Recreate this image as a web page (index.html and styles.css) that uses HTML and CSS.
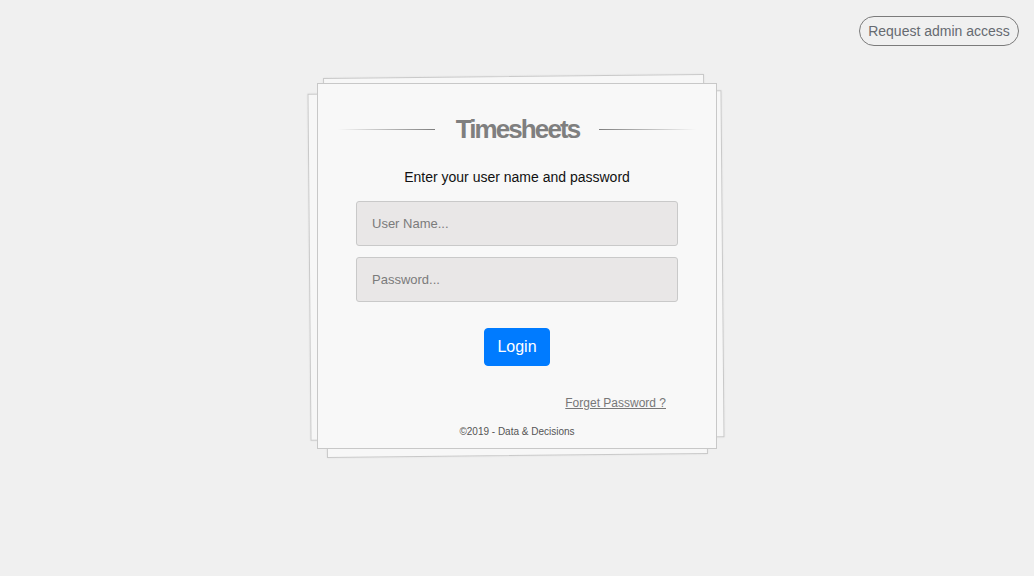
FILE: index.html
```html
<!DOCTYPE html>
<html lang="en">
<head>
<meta charset="utf-8">
<title>Timesheets - Login</title>
<link rel="stylesheet" href="styles.css">
</head>
<body>
<header class="topbar">
  <button class="admin-btn" type="button">Request admin access</button>
</header>
<main class="stage">
  <div class="card-stack">
    <div class="sheet sheet-back"></div>
    <div class="sheet sheet-mid"></div>
    <form class="card">
      <div class="title-row">
        <span class="rule rule-left"></span>
        <h1 class="title">Timesheets</h1>
        <span class="rule rule-right"></span>
      </div>
      <p class="subtitle">Enter your user name and password</p>
      <input class="field" type="text" placeholder="User Name...">
      <input class="field field-second" type="password" placeholder="Password...">
      <button class="login-btn" type="button">Login</button>
      <div class="forgot-row"><a class="forgot" href="#">Forget Password ?</a></div>
      <p class="copyright">©2019 - Data &amp; Decisions</p>
    </form>
  </div>
</main>
</body>
</html>
```

FILE: styles.css
```css
html, body {
  margin: 0;
  padding: 0;
}
body {
  background: #f0f0f0;
  font-family: "Liberation Sans", Arial, sans-serif;
  width: 1034px;
  height: 576px;
  overflow: hidden;
}
.topbar {
  display: flex;
  justify-content: flex-end;
  padding: 16px 15px 0 0;
  height: 30px;
}
.admin-btn {
  height: 30px;
  width: 160px;
  padding: 0;
  border: 1px solid #7b7b7b;
  border-radius: 15px;
  background: transparent;
  color: #666a70;
  font-family: "Liberation Sans", Arial, sans-serif;
  font-size: 14px;
  line-height: 28px;
}
.stage {
  display: flex;
  justify-content: center;
  padding-top: 37px;
}
.card-stack {
  position: relative;
  width: 400px;
  height: 366px;
}
.sheet {
  position: absolute;
  background: #f7f7f7;
  border: 1px solid #c9c9c9;
  box-shadow: 0 0 2px rgba(0,0,0,0.08);
  box-sizing: border-box;
}
.sheet-back {
  left: 8px;
  top: -7px;
  width: 381px;
  height: 380px;
  transform: rotate(-0.6deg);
}
.sheet-mid {
  left: -8px;
  top: 9px;
  width: 414px;
  height: 347px;
  transform: rotate(-0.5deg);
}
.card {
  position: relative;
  box-sizing: border-box;
  width: 400px;
  height: 366px;
  margin: 0;
  padding: 28px 38px 0;
  background: #f8f8f8;
  border: 1px solid #c8c8c8;
  display: flex;
  flex-direction: column;
  align-items: stretch;
}
.title-row {
  display: flex;
  align-items: center;
  justify-content: center;
  height: 34px;
  margin: 0 -18px;
}
.rule {
  height: 1px;
  width: 97px;
}
.rule-left {
  background: linear-gradient(to right, rgba(128,128,128,0), #7f7f7f);
  margin-right: 21px;
}
.rule-right {
  background: linear-gradient(to right, #7f7f7f, rgba(128,128,128,0));
  margin-left: 20px;
}
.title {
  margin: 0;
  font-size: 26px;
  line-height: 34px;
  font-weight: bold;
  color: #7f7f7f;
  letter-spacing: -1.9px;
}
.subtitle {
  margin: 21px 0 0;
  font-size: 14px;
  line-height: 20px;
  text-align: center;
  color: #111;
}
.field {
  box-sizing: border-box;
  height: 45px;
  width: 100%;
  margin: 14px 0 0;
  padding: 0 15px;
  background: #e9e7e7;
  border: 1px solid #c9c9c9;
  border-radius: 3px;
  font-family: "Liberation Sans", Arial, sans-serif;
  font-size: 13px;
  color: #555;
}
.field::placeholder {
  color: #7b7b7b;
}
.field-second {
  margin-top: 11px;
}
.login-btn {
  align-self: center;
  margin-top: 26px;
  height: 38px;
  padding: 0 12px;
  background: #007bff;
  border: 1px solid #007bff;
  border-radius: 4px;
  color: #fff;
  font-family: "Liberation Sans", Arial, sans-serif;
  font-size: 16px;
  line-height: 24px;
}
.forgot-row {
  display: flex;
  justify-content: flex-end;
  padding-right: 12px;
  margin-top: 29px;
  height: 16px;
}
.forgot {
  font-size: 12px;
  line-height: 16px;
  color: #777;
  text-decoration: underline;
}
.copyright {
  margin: 14px 0 0;
  font-size: 10px;
  line-height: 14px;
  text-align: center;
  color: #555;
}
```
